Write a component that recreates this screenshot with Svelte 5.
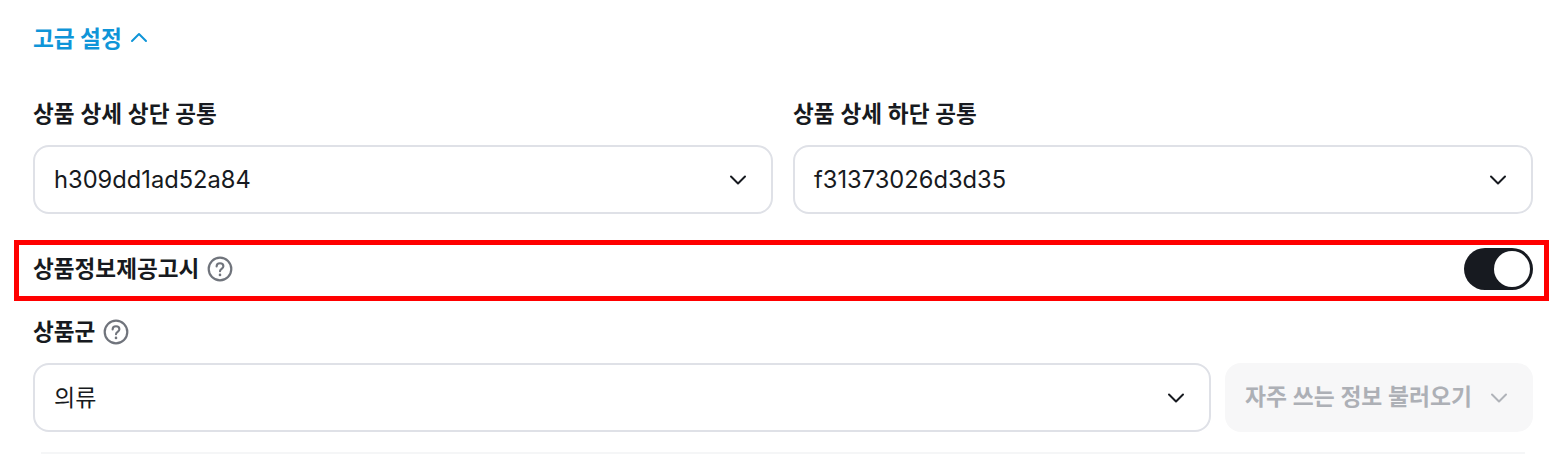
<script>
  const columns = [
    { label: '상품 상세 상단 공통', value: 'h309dd1ad52a84' },
    { label: '상품 상세 하단 공통', value: 'f31373026d3d35' }
  ];
</script>

{#snippet chevron(cls)}
  <svg class="chev {cls}" viewBox="0 0 18 18" width="18" height="18" fill="none" aria-hidden="true">
    <path d="M2 5.5 9 12.5 16 5.5" stroke="currentColor" stroke-width="2" stroke-linecap="round" stroke-linejoin="round" />
  </svg>
{/snippet}

{#snippet help()}
  <svg class="help" viewBox="0 0 26 26" width="26" height="26" fill="none" aria-hidden="true">
    <circle cx="13" cy="13" r="11.3" stroke="currentColor" stroke-width="2.2" />
    <path d="M9.6 10.4c0-2 1.5-3.2 3.4-3.2s3.4 1.2 3.4 3c0 2.6-3.4 2.6-3.4 5" stroke="currentColor" stroke-width="2.1" stroke-linecap="round" />
    <circle cx="13" cy="18.9" r="1.3" fill="currentColor" />
  </svg>
{/snippet}

<main class="page">
  <button class="advanced" type="button">
    <span>고급 설정</span>
    <svg viewBox="0 0 18 12" width="18" height="12" fill="none" aria-hidden="true">
      <path d="M2 10 9 3 16 10" stroke="currentColor" stroke-width="2" stroke-linecap="round" stroke-linejoin="round" />
    </svg>
  </button>

  <div class="columns">
    {#each columns as col}
      <div class="field">
        <div class="label">{col.label}</div>
        <div class="select latin">
          <span>{col.value}</span>
          {@render chevron('')}
        </div>
      </div>
    {/each}
  </div>

  <div class="notice">
    <div class="label-row">
      <span class="label">상품정보제공고시</span>
      {@render help()}
    </div>
    <div class="toggle"><span class="knob"></span></div>
  </div>

  <div class="label-row group">
    <span class="label">상품군</span>
    {@render help()}
  </div>

  <div class="group-row">
    <div class="select grow">
      <span class="lift">의류</span>
      {@render chevron('')}
    </div>
    <div class="load">
      <span class="lift">자주 쓰는 정보 불러오기</span>
      {@render chevron('muted')}
    </div>
  </div>

  <div class="rule"></div>
</main>

<style>
  :global(body) {
    margin: 0;
    background: #fff;
  }
  .page {
    box-sizing: border-box;
    width: 1568px;
    height: 455px;
    overflow: hidden;
    padding: 21px 35px 0 33px;
    font-family: Inter, "Noto Sans CJK KR", "Noto Sans", sans-serif;
    color: #171a20;
  }
  .advanced {
    display: flex;
    align-items: center;
    gap: 8px;
    height: 32px;
    padding: 0;
    border: 0;
    background: none;
    font: inherit;
    font-size: 22.7px;
    font-weight: 700;
    color: #0f95d8;
  }
  .columns {
    display: grid;
    grid-template-columns: 1fr 1fr;
    gap: 20px;
    margin-top: 43px;
  }
  .label {
    font-size: 22.6px;
    line-height: 36px;
    font-weight: 700;
    word-spacing: 0.5px;
  }
  .field .label {
    margin-bottom: 13px;
  }
  .select {
    box-sizing: border-box;
    display: flex;
    align-items: center;
    justify-content: space-between;
    height: 69px;
    padding: 0 24px 0 19px;
    border: 2px solid #dfe1e7;
    border-radius: 16px;
    font-size: 23px;
    background: #fff;
  }
  .latin {
    font-size: 23.7px;
  }
  .lift {
    position: relative;
    top: -2px;
  }
  .chev {
    flex: none;
    color: #171a20;
  }
  .chev.muted {
    color: #b0b3b9;
  }
  .notice {
    box-sizing: border-box;
    display: flex;
    align-items: center;
    justify-content: space-between;
    height: 61px;
    margin: 26px -16px 0 -19px;
    padding: 0 11px 3px 14px;
    border: 5px solid #ff0000;
  }
  .label-row {
    display: flex;
    align-items: center;
    gap: 8px;
  }
  .help {
    color: #70747c;
  }
  .toggle {
    box-sizing: border-box;
    display: flex;
    justify-content: flex-end;
    align-items: center;
    width: 69.5px;
    height: 42px;
    padding: 0 3px;
    border-radius: 21px;
    background: #171a20;
  }
  .knob {
    width: 36px;
    height: 36px;
    border-radius: 50%;
    background: #fff;
  }
  .group {
    margin-top: 13px;
  }
  .group-row {
    display: flex;
    gap: 14px;
    margin-top: 13px;
  }
  .grow {
    flex: 1;
  }
  .load {
    box-sizing: border-box;
    flex: none;
    display: flex;
    align-items: center;
    gap: 18px;
    width: 308px;
    height: 69px;
    padding: 0 24px 0 20px;
    border-radius: 16px;
    background: #f7f7f8;
    color: #adb0b6;
    font-size: 22.8px;
    font-weight: 600;
  }
  .rule {
    height: 2px;
    margin: 20px 8px 0;
    background: #f5f6f7;
  }
</style>
